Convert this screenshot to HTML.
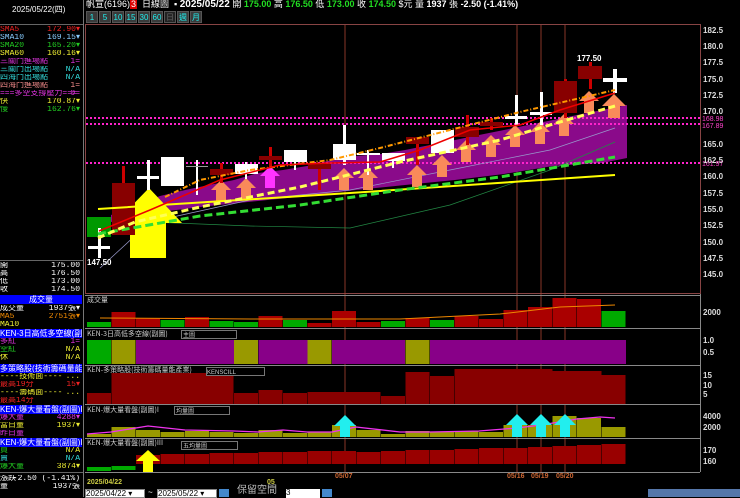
<!DOCTYPE html>
<html><head><meta charset="utf-8"><style>
*{margin:0;padding:0;box-sizing:border-box}
body{width:740px;height:497px;background:#000;overflow:hidden;position:relative;font-family:"Liberation Sans","Noto Sans CJK TC",sans-serif;font-size:9px;color:#fff}
.t{position:absolute;white-space:nowrap;line-height:11px}
.l{position:absolute;left:0;width:82px;height:8px;line-height:8px;font-family:"Liberation Mono","Noto Sans CJK TC",monospace;font-size:8px;white-space:nowrap;overflow:hidden}
.l span{position:absolute;right:2px;top:0}
.hb{position:absolute;left:0;width:82px;height:9px;background:#0000ff;color:#fff;font-size:8px;line-height:9px;overflow:hidden;white-space:nowrap}
.btn{position:absolute;top:11px;height:12px;background:#3a3a3a;color:#2ee;font-size:8px;line-height:12px;text-align:center;border:1px solid #555}
</style></head><body>
<div class="t" style="left:86px;top:-1px;font-size:9px">帆宣(6196)<span style="background:#d00;color:#fff;padding:0 1px">3</span> &nbsp;日線圖 &nbsp;▪ <b style="font-size:10px">2025/05/22</b> 開 <b style="color:#2d2">175.00</b> 高 <b style="color:#2d2">176.50</b> 低 <b style="color:#2d2">173.00</b> 收 <b style="color:#2d2">174.50</b> $元 量 <b>1937</b> 張 <b>-2.50 (-1.41%)</b></div>
<div class="btn" style="left:86px;width:12px">1</div><div class="btn" style="left:99px;width:12px">5</div><div class="btn" style="left:112px;width:12px">10</div><div class="btn" style="left:125px;width:12px">15</div><div class="btn" style="left:138px;width:12px">30</div><div class="btn" style="left:151px;width:12px">60</div><div class="btn" style="left:164px;width:12px;background:#222;color:#666">日</div><div class="btn" style="left:177px;width:12px">週</div><div class="btn" style="left:190px;width:12px">月</div>
<div class="t" style="left:12px;top:4px;font-size:8px">2025/05/22(四)</div>
<div style="position:absolute;left:0;top:24px;width:83px;height:1px;background:#666"></div>
<div style="position:absolute;left:83px;top:0;width:1px;height:497px;background:#777"></div>
<div class="l" style="top:26px;color:#e22">SMA5<span>172.90▾</span></div>
<div class="l" style="top:34px;color:#8cf">SMA10<span>169.15▾</span></div>
<div class="l" style="top:42px;color:#2c2">SMA20<span>165.20▾</span></div>
<div class="l" style="top:50px;color:#ee3">SMA60<span>160.16▾</span></div>
<div class="l" style="top:58px;color:#d3d">三關鬥進場點<span style="color:#d3d">1=</span></div>
<div class="l" style="top:66px;color:#3dd">三關鬥出場點<span>N/A</span></div>
<div class="l" style="top:74px;color:#3dd">四海鬥出場點<span>N/A</span></div>
<div class="l" style="top:82px;color:#e88">四海鬥進場點<span>1=</span></div>
<div class="l" style="top:90px;color:#d3d">===多空支撐壓力===<span>0=</span></div>
<div class="l" style="top:98px;color:#ee3">快<span>170.87▾</span></div>
<div class="l" style="top:106px;color:#2c2">慢<span>162.76▾</span></div>
<div style="position:absolute;left:0;top:260px;width:83px;height:1px;background:#666"></div>
<div class="l" style="top:262px">開<span>175.00</span></div>
<div class="l" style="top:270px">高<span>176.50</span></div>
<div class="l" style="top:278px">低<span>173.00</span></div>
<div class="l" style="top:286px">收<span>174.50</span></div>
<div class="hb" style="top:295px;text-align:center">成交量</div>
<div class="l" style="top:305px">成交量<span>1937張▾</span></div>
<div class="l" style="top:313px;color:#e80">MA5<span>2751張▾</span></div>
<div class="l" style="top:321px;color:#ee3">MA10</div>
<div class="hb" style="top:329px">KEN-3日高低多空線(副圖</div>
<div class="l" style="top:338px;color:#d3d">多紅<span>1=</span></div>
<div class="l" style="top:346px;color:#2c2">空紅<span style="color:#ee3">N/A</span></div>
<div class="l" style="top:354px;color:#ee3">休<span>N/A</span></div>
<div class="hb" style="top:364px">多策略股(技術籌碼量能</div>
<div class="l" style="top:373px;color:#ee3">----技術面----<span>...</span></div>
<div class="l" style="top:381px;color:#e22">最高19分<span>15▾</span></div>
<div class="l" style="top:389px;color:#ee3">----籌碼面----<span>...</span></div>
<div class="l" style="top:397px;color:#e22">最高14分</div>
<div class="hb" style="top:405px">KEN-爆大量看盤(副圖)I</div>
<div class="l" style="top:414px;color:#d3d">爆大量<span>4288▾</span></div>
<div class="l" style="top:422px;color:#ee3">當日量<span>1937▾</span></div>
<div class="l" style="top:430px;color:#d3d">昨日量</div>
<div class="hb" style="top:438px">KEN-爆大量看盤(副圖)II</div>
<div class="l" style="top:447px;color:#2c2">買<span style="color:#ee3">N/A</span></div>
<div class="l" style="top:455px;color:#3dd">賣<span>N/A</span></div>
<div class="l" style="top:463px;color:#2c2">爆大量<span style="color:#ee3">3874▾</span></div>
<div style="position:absolute;left:0;top:472px;width:83px;height:1px;background:#666"></div>
<div class="l" style="top:475px">漲跌<span>-2.50 (-1.41%)</span></div>
<div class="l" style="top:483px">量<span>1937張</span></div>
<svg style="position:absolute;left:0;top:0" width="740" height="497">
<g fill="none">
<rect x="85.5" y="24.5" width="615" height="269" stroke="#844"/>
<line x1="345" y1="25" x2="345" y2="472" stroke="#a43" stroke-width="0.8"/>
<line x1="517" y1="25" x2="517" y2="472" stroke="#a43" stroke-width="0.8"/>
<line x1="541" y1="25" x2="541" y2="472" stroke="#a43" stroke-width="0.8"/>
<line x1="565" y1="25" x2="565" y2="472" stroke="#a43" stroke-width="0.8"/>
</g>
<polygon fill="#8a0a8a" points="111,215 136,205 160,196 185,190 209,185 234,180 258,173 283,170 307,166 332,160 356,156 381,154 405,150 430,145 455,140 479,135 504,130 528,125 553,120 577,115 602,110 627,105 627,158 602,163 553,166 504,174 455,180 405,185 356,190 307,196 258,201 209,206 160,212 111,222"/>
<g stroke="#f2c" stroke-width="2" stroke-dasharray="2,2">
<line x1="86" y1="118" x2="700" y2="118"/><line x1="86" y1="124" x2="700" y2="124"/><line x1="86" y1="163" x2="700" y2="163"/></g>
<g fill="#f4c" font-size="7" font-family="Liberation Sans"><text x="702" y="121">168.98</text><text x="702" y="128">167.89</text><text x="702" y="166">161.97</text></g>
<polyline fill="none" stroke="#99c" stroke-width="0.7" points="100,268 150,222 250,200 350,190 450,170 550,150 615,128"/>
<polyline fill="none" stroke="#284" stroke-width="0.7" points="150,222 250,226 350,228 450,205 550,170 615,142"/>
<g fill="#f98a5a">
<path d="M246,178 l-10,10 h5 v12 h10 v-12 h5z"/>
<path d="M344,168 l-10,10 h5 v12 h10 v-12 h5z"/>
<path d="M368,168 l-10,10 h5 v12 h10 v-12 h5z"/>
<path d="M221,180 l-10,10 h5 v12 h10 v-12 h5z"/>
<path d="M417,165 l-10,10 h5 v12 h10 v-12 h5z"/>
<path d="M442,155 l-10,10 h5 v12 h10 v-12 h5z"/>
<path d="M466,140 l-10,10 h5 v12 h10 v-12 h5z"/>
<path d="M491,135 l-10,10 h5 v12 h10 v-12 h5z"/>
<path d="M515,125 l-10,10 h5 v12 h10 v-12 h5z"/>
<path d="M540,122 l-10,10 h5 v12 h10 v-12 h5z"/>
<path d="M564,114 l-10,10 h5 v12 h10 v-12 h5z"/>
<path d="M589,91 l-10,10 h5 v12 h10 v-12 h5z"/>
<path d="M614,94 l-12,12 h6 v12 h12 v-12 h6z"/>
</g>
<path fill="#f3f" d="M270,166 l-10,10 h5 v12 h10 v-12 h5z"/>
<path fill="#ff0" d="M149,188 L115,223 H130 V258 H166 V223 H182 Z"/>
<g>
<rect x="87" y="217" width="24" height="20" fill="#090"/>
<g fill="#fff"><rect x="88" y="246" width="22" height="3"/><rect x="98" y="228" width="3" height="30"/></g>
<rect x="122" y="166" width="3" height="18" fill="#c00"/><rect x="112" y="183" width="23" height="52" fill="#800"/>
<g fill="#fff"><rect x="137" y="176" width="22" height="3"/><rect x="147" y="160" width="3" height="30"/></g>
<rect x="161" y="157" width="23" height="29" fill="#fff"/>
<rect x="196" y="160" width="2" height="35" fill="#fff"/><rect x="186" y="166" width="22" height="1" fill="#999"/>
<rect x="220" y="163" width="3" height="20" fill="#c00"/><rect x="210" y="169" width="23" height="6" fill="#800"/>
<rect x="245" y="162" width="2" height="17" fill="#fff"/><rect x="235" y="164" width="23" height="10" fill="#fff"/>
<rect x="269" y="147" width="3" height="21" fill="#c00"/><rect x="259" y="156" width="23" height="4" fill="#800"/>
<rect x="284" y="150" width="23" height="12" fill="#fff"/><rect x="294" y="162" width="2" height="8" fill="#fff"/>
<rect x="318" y="164" width="3" height="26" fill="#c00"/><rect x="308" y="164" width="23" height="5" fill="#800"/>
<rect x="343" y="125" width="3" height="40" fill="#fff"/><rect x="333" y="144" width="23" height="16" fill="#fff"/>
<rect x="367" y="150" width="2" height="25" fill="#fff"/><rect x="357" y="153" width="23" height="2" fill="#fff"/>
<rect x="382" y="153" width="23" height="8" fill="#fff"/><rect x="392" y="161" width="2" height="7" fill="#fff"/>
<rect x="416" y="137" width="3" height="28" fill="#c00"/><rect x="406" y="137" width="23" height="7" fill="#800"/>
<rect x="431" y="130" width="23" height="23" fill="#fff"/>
<rect x="466" y="115" width="3" height="30" fill="#c00"/><rect x="455" y="127" width="24" height="10" fill="#800"/>
<rect x="490" y="118" width="3" height="12" fill="#c00"/><rect x="480" y="122" width="23" height="4" fill="#800"/>
<g fill="#fff"><rect x="505" y="116" width="22" height="3"/><rect x="515" y="95" width="3" height="30"/></g>
<g fill="#fff"><rect x="530" y="112" width="22" height="3"/><rect x="540" y="92" width="3" height="33"/></g>
<rect x="564" y="79" width="3" height="39" fill="#c00"/><rect x="554" y="81" width="23" height="32" fill="#800"/>
<rect x="589" y="62" width="3" height="27" fill="#c00"/><rect x="578" y="66" width="24" height="13" fill="#800"/>
<g fill="#fff"><rect x="603" y="78" width="24" height="4"/><rect x="613" y="69" width="4" height="24"/></g>
</g>
<polyline fill="none" stroke="#ff0" stroke-width="2" points="98,209 350,193 615,175"/>
<polyline fill="none" stroke="#3d3" stroke-width="3" stroke-dasharray="8,4" points="98,234 200,216 300,205 400,190 500,177 615,157"/>
<polyline fill="none" stroke="#ff5" stroke-width="3" stroke-dasharray="7,4" points="98,238 135,222 200,207 300,187 400,162 500,140 560,122 615,106"/>
<polyline fill="none" stroke="#f90" stroke-width="2" stroke-dasharray="5,2,1,2" points="165,197 200,180 250,170 330,160 380,148 450,130 520,112 615,90"/>
<polyline fill="none" stroke="#e00" stroke-width="1.5" points="99,231 150,210 220,180 280,165 330,163 380,162 420,150 470,130 520,125 560,110 615,93"/>
<g font-size="8" font-weight="bold" fill="#fff" font-family="Liberation Sans"><text x="87" y="265">147.50</text><text x="577" y="61">177.50</text></g>
<g font-size="8" font-weight="bold" fill="#ddd" font-family="Liberation Sans">
<text x="703" y="33">182.5</text><text x="703" y="49">180.0</text><text x="703" y="65">177.5</text><text x="703" y="82">175.0</text><text x="703" y="98">172.5</text><text x="703" y="114">170.0</text><text x="703" y="147">165.0</text><text x="703" y="163">162.5</text><text x="703" y="179">160.0</text><text x="703" y="196">157.5</text><text x="703" y="212">155.0</text><text x="703" y="228">152.5</text><text x="703" y="245">150.0</text><text x="703" y="261">147.5</text><text x="703" y="277">145.0</text>
<text x="703" y="315">2000</text><text x="703" y="343">1.0</text><text x="703" y="355">0.5</text><text x="703" y="378">15</text><text x="703" y="388">10</text><text x="703" y="397">5</text><text x="703" y="419">4000</text><text x="703" y="430">2000</text><text x="703" y="453">170</text><text x="703" y="464">160</text>
</g>
<g stroke="#888"><line x1="85" y1="295.5" x2="700" y2="295.5"/><line x1="85" y1="328.5" x2="700" y2="328.5"/><line x1="85" y1="365.5" x2="700" y2="365.5"/><line x1="85" y1="404.5" x2="700" y2="404.5"/><line x1="85" y1="438.5" x2="700" y2="438.5"/><line x1="85" y1="472.5" x2="700" y2="472.5"/></g>
<line x1="700.5" y1="294" x2="700.5" y2="472" stroke="#888"/>
<g>
<rect x="87" y="322" width="24" height="5" fill="#0a0"/><rect x="111.5" y="312" width="24" height="15" fill="#a00"/><rect x="136" y="318" width="24" height="9" fill="#a00"/><rect x="160.5" y="320" width="24" height="7" fill="#0a0"/><rect x="185" y="317" width="24" height="10" fill="#a00"/><rect x="209.5" y="321" width="24" height="6" fill="#0a0"/><rect x="234" y="322" width="24" height="5" fill="#0a0"/><rect x="258.5" y="316" width="24" height="11" fill="#a00"/><rect x="283" y="320" width="24" height="7" fill="#0a0"/><rect x="307.5" y="323" width="24" height="4" fill="#a00"/><rect x="332" y="311" width="24" height="16" fill="#a00"/><rect x="356.5" y="322" width="24" height="5" fill="#a00"/><rect x="381" y="321" width="24" height="6" fill="#0a0"/><rect x="405.5" y="318" width="24" height="9" fill="#a00"/><rect x="430" y="320" width="24" height="7" fill="#0a0"/><rect x="454.5" y="316" width="24" height="11" fill="#a00"/><rect x="479" y="319" width="24" height="8" fill="#a00"/><rect x="503.5" y="310" width="24" height="17" fill="#a00"/><rect x="528" y="307" width="24" height="20" fill="#a00"/><rect x="552.5" y="298" width="24" height="29" fill="#a00"/><rect x="577" y="299" width="24" height="28" fill="#a00"/><rect x="601.5" y="311" width="24" height="16" fill="#0a0"/>
<polyline fill="none" stroke="#e80" points="100,318 250,319 400,319 500,314 560,307 615,305"/>
<text x="87" y="302" font-size="7" fill="#ccc" font-family="Noto Sans CJK TC">成交量</text>
</g>
<g>
<rect x="87" y="340" width="24" height="24" fill="#0a0"/><rect x="111.5" y="340" width="24" height="24" fill="#990"/><rect x="136" y="340" width="98" height="24" fill="#808"/><rect x="234" y="340" width="24" height="24" fill="#990"/><rect x="258.5" y="340" width="49" height="24" fill="#808"/><rect x="307.5" y="340" width="24" height="24" fill="#990"/><rect x="332" y="340" width="73" height="24" fill="#808"/><rect x="405.5" y="340" width="24" height="24" fill="#990"/><rect x="430" y="340" width="196" height="24" fill="#808"/>
<text x="87" y="336" font-size="7" fill="#ccc" font-family="Noto Sans CJK TC">KEN-3日高低多空線(副圖)</text>
<rect x="181.5" y="330.5" width="55" height="8" fill="#000" stroke="#777"/><text x="183" y="337" font-size="6" fill="#ccc" font-family="Noto Sans CJK TC">主圖</text>
</g>
<g fill="#800">
<rect x="87" y="393" width="24" height="11"/><rect x="111.5" y="373" width="122" height="31"/><rect x="234" y="393" width="24" height="11"/><rect x="258.5" y="390" width="24" height="14"/><rect x="283" y="393" width="24" height="11"/><rect x="307.5" y="392" width="73" height="12"/><rect x="381" y="396" width="24" height="8"/><rect x="405.5" y="372" width="24" height="32"/><rect x="430" y="376" width="24" height="28"/><rect x="454.5" y="369" width="98" height="35"/><rect x="552.5" y="371" width="49" height="33"/><rect x="601.5" y="375" width="24" height="29"/>
</g>
<text x="87" y="372" font-size="7" fill="#ccc" font-family="Noto Sans CJK TC">KEN-多策略股(技術籌碼量能產業)</text>
<rect x="206.5" y="367.5" width="58" height="8" fill="#000" stroke="#777"/><text x="207" y="374" font-size="6" fill="#ccc">KENSCILL</text>
<g fill="#990">
<rect x="87" y="434" width="24" height="3"/><rect x="111.5" y="427" width="24" height="10"/><rect x="136" y="430" width="24" height="7"/><rect x="160.5" y="432" width="24" height="5"/><rect x="185" y="431" width="24" height="6"/><rect x="209.5" y="432" width="24" height="5"/><rect x="234" y="433" width="24" height="4"/><rect x="258.5" y="430" width="24" height="7"/><rect x="283" y="433" width="24" height="4"/><rect x="307.5" y="432" width="24" height="5"/><rect x="332" y="425" width="24" height="12"/><rect x="356.5" y="430" width="24" height="7"/><rect x="381" y="434" width="24" height="3"/><rect x="405.5" y="431" width="24" height="6"/><rect x="430" y="432" width="24" height="5"/><rect x="454.5" y="431" width="24" height="6"/><rect x="479" y="432" width="24" height="5"/><rect x="503.5" y="425" width="24" height="12"/><rect x="528" y="425" width="24" height="12"/><rect x="552.5" y="416" width="24" height="21"/><rect x="577" y="418" width="24" height="19"/><rect x="601.5" y="427" width="24" height="10"/>
</g>
<polyline fill="none" stroke="#e3e" stroke-width="1.3" points="87,434 111,432 148,426 185,430 234,431 258,432 283,430 307,432 332,432 356,427 400,432 430,432 479,431 517,428 541,425 577,419 600,417 615,418"/>
<g fill="#2ee">
<path d="M345,415 l-11,11 h6 v11 h10 v-11 h6z"/><path d="M517,414 l-11,11 h6 v12 h10 v-12 h6z"/><path d="M541,414 l-11,11 h6 v12 h10 v-12 h6z"/><path d="M565,414 l-11,11 h6 v12 h10 v-12 h6z"/>
</g>
<text x="87" y="412" font-size="7" fill="#ccc" font-family="Noto Sans CJK TC">KEN-爆大量看盤(副圖)I</text>
<rect x="174.5" y="406.5" width="55" height="8" fill="#000" stroke="#777"/><text x="176" y="413" font-size="6" fill="#ccc" font-family="Noto Sans CJK TC">均量圖</text>
<g fill="#900">
<rect x="136" y="455" width="24" height="9"/><rect x="160.5" y="454" width="24" height="10"/><rect x="185" y="454" width="24" height="10"/><rect x="209.5" y="453" width="24" height="11"/><rect x="234" y="453" width="24" height="11"/><rect x="258.5" y="452" width="24" height="12"/><rect x="283" y="452" width="24" height="12"/><rect x="307.5" y="451" width="24" height="13"/><rect x="332" y="451" width="24" height="13"/><rect x="356.5" y="452" width="24" height="12"/><rect x="381" y="451" width="24" height="13"/><rect x="405.5" y="450" width="24" height="14"/><rect x="430" y="450" width="24" height="14"/><rect x="454.5" y="449" width="24" height="15"/><rect x="479" y="448" width="24" height="16"/><rect x="503.5" y="448" width="24" height="16"/><rect x="528" y="447" width="24" height="17"/><rect x="552.5" y="446" width="24" height="18"/><rect x="577" y="445" width="24" height="19"/><rect x="601.5" y="444" width="24" height="20"/>
</g>
<rect x="87" y="467" width="24" height="4" fill="#0a0"/><rect x="111.5" y="466" width="24" height="4" fill="#0a0"/>
<path fill="#ff0" d="M148,450 l-12,11 h7 v11 h10 v-11 h7z"/>
<text x="87" y="445" font-size="7" fill="#ccc" font-family="Noto Sans CJK TC">KEN-爆大量看盤(副圖)III</text>
<rect x="181.5" y="441.5" width="56" height="8" fill="#000" stroke="#777"/><text x="183" y="448" font-size="6" fill="#ccc" font-family="Noto Sans CJK TC">五均量圖</text>
<g font-size="7" font-weight="bold" font-family="Liberation Sans">
<text x="87" y="484" fill="#cc4">2025/04/22</text><text x="267" y="484" fill="#cc4">05</text><text x="335" y="478" fill="#c63">05/07</text><text x="507" y="478" fill="#c63">05/16</text><text x="531" y="478" fill="#c63">05/19</text><text x="556" y="478" fill="#c63">05/20</text>
</g>
</svg>
<div style="position:absolute;left:85px;top:489px;width:60px;height:9px;background:#fff;border:1px solid #888;color:#000;font-size:8px;line-height:8px">2025/04/22 ▾</div>
<div class="t" style="left:148px;top:487px;font-size:8px">~</div>
<div style="position:absolute;left:157px;top:489px;width:60px;height:9px;background:#fff;border:1px solid #888;color:#000;font-size:8px;line-height:8px">2025/05/22 ▾</div>
<div style="position:absolute;left:219px;top:489px;width:10px;height:8px;background:#48c"></div>
<div class="t" style="left:237px;top:485px;font-size:10px;color:#bbb">保留空間</div>
<div style="position:absolute;left:286px;top:489px;width:34px;height:9px;background:#fff;color:#000;font-size:8px;line-height:8px">3</div>
<div style="position:absolute;left:322px;top:489px;width:10px;height:8px;background:#48c"></div>
<div style="position:absolute;left:648px;top:489px;width:92px;height:8px;background:#57a"></div>
</body></html>
